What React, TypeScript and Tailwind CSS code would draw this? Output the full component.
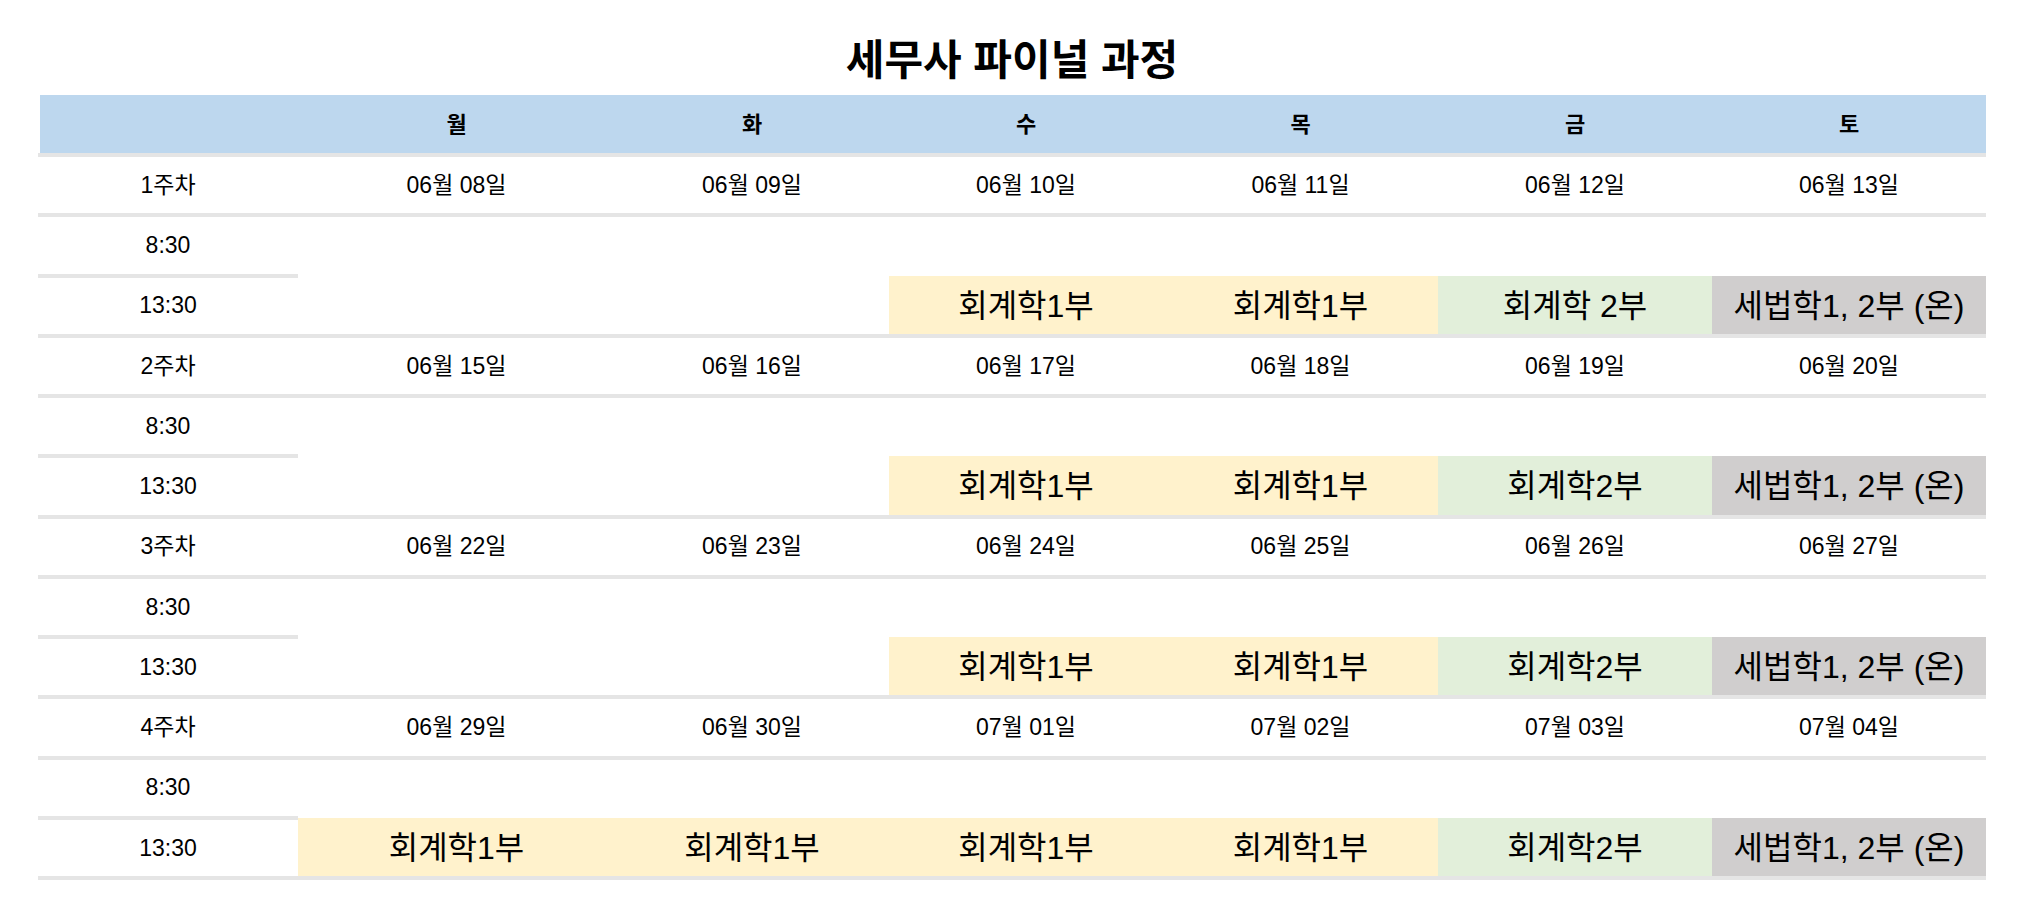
import React from "react";

type Cell = { text: string; color: "y" | "g" | "s" } | null;

const weeks: { label: string; dates: string[]; afternoon: Cell[] }[] = [
  {
    label: "1주차",
    dates: ["06월 08일", "06월 09일", "06월 10일", "06월 11일", "06월 12일", "06월 13일"],
    afternoon: [
      null,
      null,
      { text: "회계학1부", color: "y" },
      { text: "회계학1부", color: "y" },
      { text: "회계학 2부", color: "g" },
      { text: "세법학1, 2부 (온)", color: "s" },
    ],
  },
  {
    label: "2주차",
    dates: ["06월 15일", "06월 16일", "06월 17일", "06월 18일", "06월 19일", "06월 20일"],
    afternoon: [
      null,
      null,
      { text: "회계학1부", color: "y" },
      { text: "회계학1부", color: "y" },
      { text: "회계학2부", color: "g" },
      { text: "세법학1, 2부 (온)", color: "s" },
    ],
  },
  {
    label: "3주차",
    dates: ["06월 22일", "06월 23일", "06월 24일", "06월 25일", "06월 26일", "06월 27일"],
    afternoon: [
      null,
      null,
      { text: "회계학1부", color: "y" },
      { text: "회계학1부", color: "y" },
      { text: "회계학2부", color: "g" },
      { text: "세법학1, 2부 (온)", color: "s" },
    ],
  },
  {
    label: "4주차",
    dates: ["06월 29일", "06월 30일", "07월 01일", "07월 02일", "07월 03일", "07월 04일"],
    afternoon: [
      { text: "회계학1부", color: "y" },
      { text: "회계학1부", color: "y" },
      { text: "회계학1부", color: "y" },
      { text: "회계학1부", color: "y" },
      { text: "회계학2부", color: "g" },
      { text: "세법학1, 2부 (온)", color: "s" },
    ],
  },
];

const days = ["월", "화", "수", "목", "금", "토"];

const rowGrid = "grid grid-cols-[260px_317px_274px_274px_275px_274px_274px]";
const lineCell =
  "h-[60.25px] border-b-4 border-[#e5e5e5] flex items-center justify-center text-[23px] text-black";

function colorClass(c: "y" | "g" | "s") {
  if (c === "y") return "bg-[#fff2cc]";
  if (c === "g") return "bg-[#e2efda]";
  return "bg-[#d0cece]";
}

export default function App() {
  return (
    <div className="w-[2024px] h-[917px] overflow-hidden bg-white px-[38px] font-['Liberation_Sans','Noto_Sans_CJK_KR',sans-serif] text-black">
      <div className="h-[95px] pt-[27px] flex items-center justify-center">
        <h1 className="text-[42px] font-bold leading-none">세무사 파이널 과정</h1>
      </div>

      <div className="ml-[2px] h-[58px] bg-[#bdd7ee] grid grid-cols-[258px_317px_274px_274px_275px_274px_274px]">
        <div />
        {days.map((d) => (
          <div key={d} className="flex items-center justify-center text-[22px] font-bold">
            {d}
          </div>
        ))}
      </div>
      <div className="h-[4px] bg-[#e5e5e5]" />

      {weeks.map((w) => (
        <div key={w.label}>
          <div className={rowGrid}>
            <div className={lineCell}>{w.label}</div>
            {w.dates.map((d) => (
              <div key={d} className={lineCell}>
                {d}
              </div>
            ))}
          </div>
          <div className={rowGrid}>
            <div className={lineCell}>8:30</div>
            {days.map((d) => (
              <div key={d} className="h-[60.25px]" />
            ))}
          </div>
          <div className={rowGrid}>
            <div className={lineCell}>13:30</div>
            {w.afternoon.map((c, i) =>
              c ? (
                <div
                  key={i}
                  className={`-mt-[2px] h-[62.25px] border-b-4 border-[#e5e5e5] flex items-center justify-center pt-[2px] text-[32px] ${colorClass(
                    c.color
                  )}`}
                >
                  {c.text}
                </div>
              ) : (
                <div key={i} className={lineCell} />
              )
            )}
          </div>
        </div>
      ))}
    </div>
  );
}
